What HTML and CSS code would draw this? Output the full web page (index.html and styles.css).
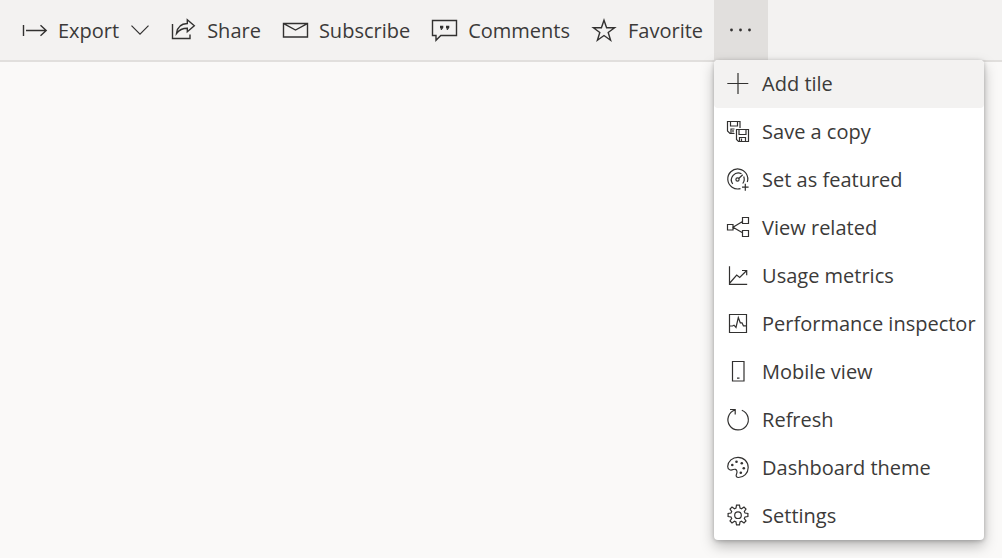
FILE: index.html
```html
<!DOCTYPE html>
<html lang="en">
<head>
<meta charset="utf-8">
<meta name="viewport" content="width=device-width, initial-scale=1">
<title>Dashboard</title>
<link rel="stylesheet" href="styles.css">
</head>
<body>
<header class="toolbar" role="toolbar" aria-label="Dashboard actions">
  <button class="action" type="button">
    <svg class="icon" viewBox="0 0 24 24" aria-hidden="true"><path d="M1.5 7v11M4 12.5h20M18.5 7.2l5.7 5.3-5.7 5.3"/></svg>
    <span>Export</span>
    <svg class="chevron" viewBox="0 0 18 24" aria-hidden="true"><path d="M.5 7.7 9 16.2l8.500-8.500"/></svg>
  </button>
  <button class="action" type="button">
    <svg class="icon" viewBox="0 0 24 24" aria-hidden="true"><path d="M1.500 6v14.500h17.500v-4"/><path d="M5.500 15.500C6.300 9 10 5.600 16.300 5.500V1.700l7 6-7 6v-3.400c-4.800 0-8 1.500-10.800 5.200z"/></svg>
    <span>Share</span>
  </button>
  <button class="action" type="button">
    <svg class="icon" viewBox="0 0 24 24" aria-hidden="true"><path d="M.5 5.500h24v13.500H.5zM.7 5.700l11.800 6.300 11.800-6.300"/></svg>
    <span>Subscribe</span>
  </button>
  <button class="action" type="button">
    <svg class="icon" viewBox="0 0 24 24" aria-hidden="true"><path d="M.5 2.500h24v15H8.800l-4.800 4.800v-4.800H.5z"/><path class="solid" d="M8 7.700h3.300v2L9.600 12H8.500l.8-1.500H8zM14 7.700h3.300v2L15.600 12h-1.100l.8-1.500H14z"/></svg>
    <span>Comments</span>
  </button>
  <button class="action" type="button">
    <svg class="icon" viewBox="0 0 24 24" aria-hidden="true"><path d="M12 2.200l2.600 7.500h8l-6.400 4.800 2.400 7.700L12 17.500l-6.600 4.700 2.400-7.700L1.400 9.700h8z"/></svg>
    <span>Favorite</span>
  </button>
  <div class="overflow">
    <button class="more" type="button" aria-label="More options" aria-haspopup="menu" aria-expanded="true">
      <svg class="icon" viewBox="0 0 24 24" aria-hidden="true"><g class="solid"><circle cx="2.500" cy="12" r="1.400"/><circle cx="11.500" cy="12" r="1.400"/><circle cx="20.500" cy="12" r="1.400"/></g></svg>
    </button>
    <div class="menu" role="menu">
      <button class="item active" role="menuitem" type="button">
        <svg class="icon" viewBox="0 0 24 24" aria-hidden="true"><path d="M1.300 11.500h21M12 1v21"/></svg>
        <span>Add tile</span>
      </button>
      <button class="item" role="menuitem" type="button">
        <svg class="icon" viewBox="0 0 24 24" aria-hidden="true"><path d="M8.500 13.500H4l-2.500-2.500v-9.500h12.500v6.500M4.500 1.500v4.500h7v-4.500M5 13v-4h3.500M7 10v2.500M10.500 9.500H22.500v12H12.500l-2-2zM13 9.500v5h7v-5M13.500 21.500v-4h6v4M15.500 18.500v3"/></svg>
        <span>Save a copy</span>
      </button>
      <button class="item" role="menuitem" type="button">
        <svg class="icon" viewBox="0 0 24 24" aria-hidden="true"><path d="M14.500 20.600A10 10 0 1 1 21.300 14"/><path d="M6.700 16A7 7 0 0 1 15.500 5.700M17.700 8.500a7 7 0 0 1-1 7"/><path d="M12.700 10.500l4-3.700"/><circle cx="11.500" cy="11.500" r="1.600"/><path d="M19.300 15.700v7M16 19.200h6.600"/></svg>
        <span>Set as featured</span>
      </button>
      <button class="item" role="menuitem" type="button">
        <svg class="icon" viewBox="0 0 24 24" aria-hidden="true"><path d="M1.500 8.500h5.500v5.500H1.500zM16.500 1.500h6v6h-6zM16.500 14.500h6v6h-6zM16.500 5.500L7 11.200l9.500 5.500"/></svg>
        <span>View related</span>
      </button>
      <button class="item" role="menuitem" type="button">
        <svg class="icon" viewBox="0 0 24 24" aria-hidden="true"><path d="M3.500 2.300v18h17.700M3.800 19l6.900-8 3 2.500 7-7M16 6.500h4.700v4.700"/></svg>
        <span>Usage metrics</span>
      </button>
      <button class="item" role="menuitem" type="button">
        <svg class="icon" viewBox="0 0 24 24" aria-hidden="true"><path d="M3.500 2.500h17v18h-17zM3.500 14h3l1.500-.8 2 2.300 2.300-10 2 5.300H16l1.400 3h3.100"/></svg>
        <span>Performance inspector</span>
      </button>
      <button class="item" role="menuitem" type="button">
        <svg class="icon" viewBox="0 0 24 24" aria-hidden="true"><path d="M6.500 1.500h11.500v19.500H6.500zM11 18.200h2.500"/></svg>
        <span>Mobile view</span>
      </button>
      <button class="item" role="menuitem" type="button">
        <svg class="icon" viewBox="0 0 24 24" aria-hidden="true"><path d="M15.800 2.200A10.200 10.200 0 1 1 9 2M4 1.500h5.200v5"/></svg>
        <span>Refresh</span>
      </button>
      <button class="item" role="menuitem" type="button">
        <svg class="icon" viewBox="0 0 24 24" aria-hidden="true"><path d="M1.700 10.500C2 5.200 6.500 1.300 12 1.300c5.800 0 10.200 4.400 10.200 10.200 0 5.700-4.400 10-9.700 10-2 0-2.700-1.200-2.200-2.700.5-1.400 1-2.500.6-3.700-.5-1.800-2-2.200-3.500-1.600-1 .4-2.300 1-3.700.3-1.500-.6-2-1.800-2-3.300z"/><g class="solid"><circle cx="6.300" cy="9" r="1.300"/><circle cx="10.500" cy="5.700" r="1.300"/><circle cx="15.800" cy="7.300" r="1.300"/><circle cx="17.800" cy="12.300" r="1.300"/><circle cx="14.800" cy="16.800" r="1.300"/></g></svg>
        <span>Dashboard theme</span>
      </button>
      <button class="item" role="menuitem" type="button">
        <svg class="icon" viewBox="0 0 24 24" aria-hidden="true"><path d="M10.500 1.200h3l.5 2.900 1.500.6 2.500-1.700 2 2-1.700 2.500.7 1.500 2.900.5v3l-2.900.5-.7 1.500 1.700 2.500-2 2-2.500-1.700-1.500.7-.5 2.900h-3L10 18l-1.500-.7L6 19l-2-2 1.700-2.500L5 13l-2.900-.5v-3L5 9l.7-1.500L4 5l2-2 2.500 1.700 1.500-.6z"/><circle cx="12" cy="11.200" r="3.300"/></svg>
        <span>Settings</span>
      </button>
    </div>
  </div>
</header>
<main class="canvas"></main>
</body>
</html>
```

FILE: styles.css
```css
* {
  box-sizing: border-box;
}

body {
  margin: 0;
  min-height: 100vh;
  display: flex;
  flex-direction: column;
  background: #faf9f8;
  color: #3b3a39;
  font-family: "Open Sans", "Noto Sans", sans-serif;
  font-size: 20px;
  line-height: 28px;
}

.toolbar {
  display: flex;
  height: 62px;
  padding-left: 11px;
  background: #f3f2f1;
  border-bottom: 2px solid #e1dfdd;
}

.action,
.more,
.item {
  display: flex;
  align-items: center;
  gap: 12px;
  border: 0;
  background: transparent;
  color: inherit;
  font: inherit;
  white-space: nowrap;
  cursor: pointer;
}

.action {
  padding: 0 11px;
}

.action span {
  padding-top: 2px;
}

.icon,
.chevron {
  flex: none;
  height: 24px;
  overflow: visible;
  fill: none;
  stroke: #323130;
  stroke-width: 1.4;
}

.icon {
  width: 24px;
}

.chevron {
  width: 18px;
  stroke-width: 1.2;
}

.solid {
  fill: #323130;
  stroke: none;
}

.overflow {
  position: relative;
  display: flex;
}

.more {
  padding: 0 15px;
  background: #e1dfdd;
}

.menu {
  position: absolute;
  top: 100%;
  left: 0;
  min-width: 270px;
  overflow: hidden;
  border-radius: 4px;
  background: #fff;
  box-shadow: 0 6px 14px rgba(0, 0, 0, 0.26), 0 1px 4px rgba(0, 0, 0, 0.22);
}

.item {
  width: 100%;
  height: 48px;
  padding: 0 8px 0 12px;
}

.item .icon {
  stroke-width: 1.2;
}

.active {
  border-radius: 4px;
  background: #f3f2f1;
}

.canvas {
  flex: 1;
}
```
